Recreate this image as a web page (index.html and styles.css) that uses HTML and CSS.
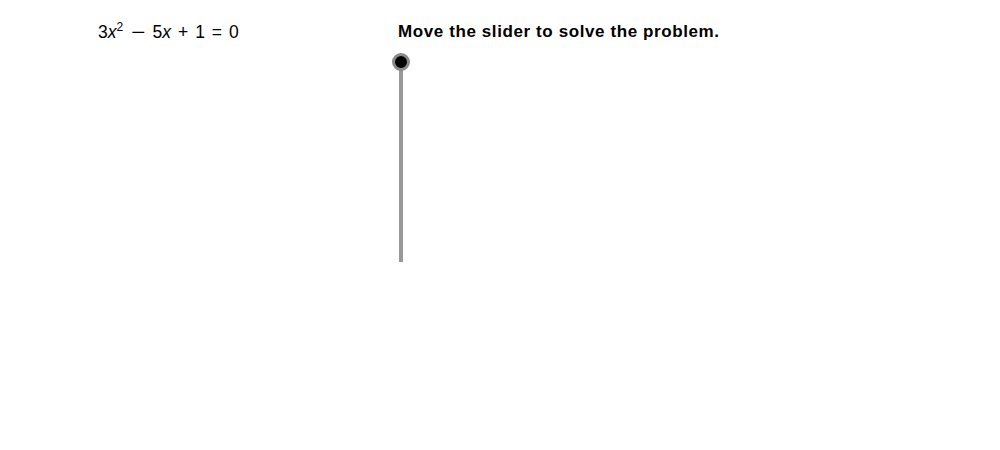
FILE: index.html
```html
<!DOCTYPE html>
<html>
<head>
<meta charset="utf-8">
<link rel="stylesheet" href="styles.css">
</head>
<body>
<div class="page">
  <div class="eq"><span>3</span><i>x</i><sup>2</sup><span class="op minus">−</span><span>5</span><i>x</i><span class="op">+</span><span>1</span><span class="op">=</span><span>0</span></div>
  <div class="right">
    <div class="title">Move the slider to solve the problem.</div>
    <div class="slider">
      <div class="track"></div>
      <div class="knob"></div>
    </div>
  </div>
</div>
</body>
</html>
```
FILE: styles.css
```css
html, body {
  margin: 0;
  background: #fff;
}
.page {
  width: 1000px;
  height: 450px;
  display: flex;
  font-family: "Liberation Sans", Arial, sans-serif;
  color: #000;
}
.eq {
  margin-left: 98px;
  width: 300px;
  padding-top: 22px;
  font-size: 17.5px;
  line-height: 20px;
  white-space: nowrap;
}
.eq i {
  font-style: italic;
}
.eq sup {
  font-size: 12px;
  vertical-align: 7px;
  line-height: 0;
}
.eq .op {
  margin: 0 7px;
}
.eq .minus {
  display: inline-block;
  transform: scaleX(1.4);
  margin: 0 9px 0 10px;
}
.right {
  display: flex;
  flex-direction: column;
  padding-top: 22px;
}
.title {
  font-weight: bold;
  font-size: 17px;
  letter-spacing: 0.6px;
  line-height: 20px;
}
.slider {
  position: relative;
  width: 18px;
  height: 210px;
  margin-top: 11px;
  margin-left: -6px;
}
.track {
  position: absolute;
  left: 7px;
  top: 9px;
  width: 4px;
  height: 200px;
  background: #999;
}
.knob {
  position: absolute;
  left: 0;
  top: 0;
  width: 12px;
  height: 12px;
  border: 3px solid #8a8a8a;
  border-radius: 50%;
  background: #000;
}
```
